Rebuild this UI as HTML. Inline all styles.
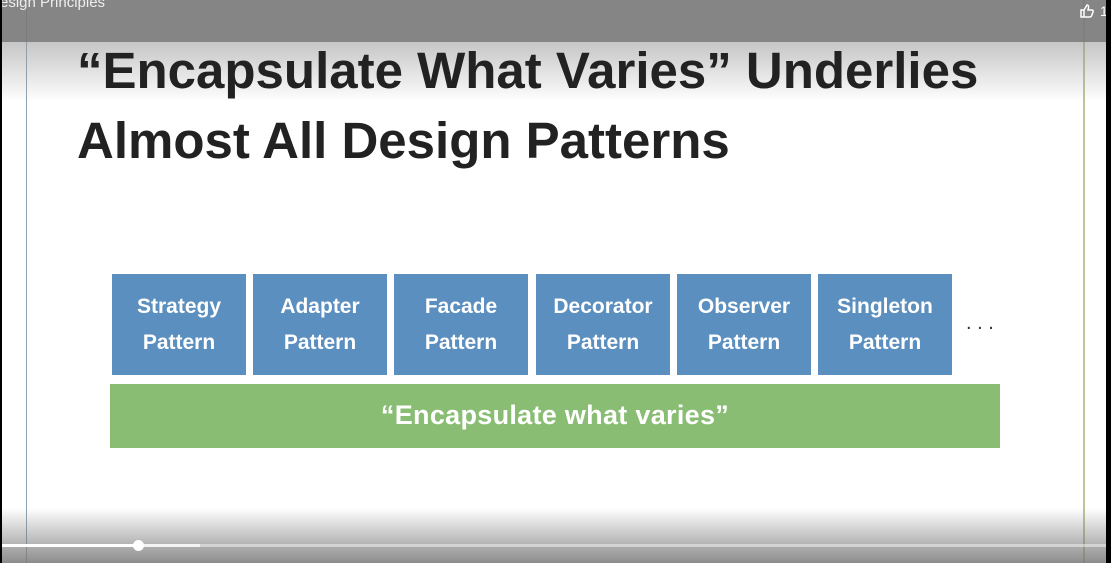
<!DOCTYPE html>
<html><head><style>
html,body{margin:0;padding:0;width:1111px;height:563px;overflow:hidden;background:#fff;position:relative;font-family:"Liberation Sans",sans-serif}
.abs{position:absolute}
.title{left:77px;top:36px;font-size:51px;font-weight:bold;color:#222;line-height:70px;letter-spacing:0px}
.box{position:absolute;top:274px;width:134px;height:101px;background:#5b8fbf;color:#fff;font-size:21px;font-weight:bold;line-height:36px;text-align:center;display:flex;align-items:center;justify-content:center}
.green{left:110px;top:384px;width:890px;height:64px;background:#8abd74;color:#fff;font-size:27px;font-weight:bold;letter-spacing:0.3px;text-align:center;line-height:62px}
</style></head><body>
<div class="abs" style="left:26px;top:0;width:1px;height:563px;background:#8fa3b3"></div>
<div class="abs" style="left:1083px;top:0;width:2px;height:563px;background:#b9c79a"></div>
<div class="abs" style="left:0;top:42px;width:1111px;height:60px;background:linear-gradient(rgba(150,150,150,0.55),rgba(255,255,255,0))"></div>
<div class="abs title">“Encapsulate What Varies” Underlies<br>Almost All Design Patterns</div>
<div class="box" style="left:112px">Strategy<br>Pattern</div>
<div class="box" style="left:253px">Adapter<br>Pattern</div>
<div class="box" style="left:394px">Facade<br>Pattern</div>
<div class="box" style="left:536px">Decorator<br>Pattern</div>
<div class="box" style="left:677px">Observer<br>Pattern</div>
<div class="box" style="left:818px">Singleton<br>Pattern</div>
<div class="abs" style="left:966px;top:312px;font-size:20px;color:#333">. . .</div>
<div class="abs green">“Encapsulate what varies”</div>
<div class="abs" style="left:0;top:0;width:1111px;height:42px;background:rgba(120,120,120,0.9)"></div>
<div class="abs" style="left:0;top:508px;width:1111px;height:55px;background:linear-gradient(rgba(120,120,120,0),rgba(120,120,120,0.85))"></div>
<div class="abs" style="left:0;top:-6px;font-size:15px;color:#eee">esign Principles</div>
<svg class="abs" style="left:1079px;top:3px" width="16" height="16" viewBox="0 0 16 16"><path d="M2 7h3v7H2zM5 7l3-5c1 0 2 1 1.5 3L9 7h4c1 0 1.5 1 1 2l-1.5 4c-.3.7-1 1-2 1H5" fill="none" stroke="#fff" stroke-width="1.5"/></svg>
<div class="abs" style="left:1100px;top:3px;font-size:14px;color:#fff">1</div>
<div class="abs" style="left:0;top:544px;width:1111px;height:3px;background:rgba(255,255,255,0.45)"></div>
<div class="abs" style="left:0;top:544px;width:200px;height:3px;background:rgba(255,255,255,0.7)"></div>
<div class="abs" style="left:0;top:544px;width:139px;height:3px;background:#fff"></div>
<div class="abs" style="left:133px;top:540px;width:11px;height:11px;border-radius:50%;background:#fff"></div>
<div class="abs" style="left:0;top:0;width:2px;height:563px;background:#000"></div>
<div class="abs" style="left:1106px;top:0;width:5px;height:563px;background:#000"></div>
</body></html>
